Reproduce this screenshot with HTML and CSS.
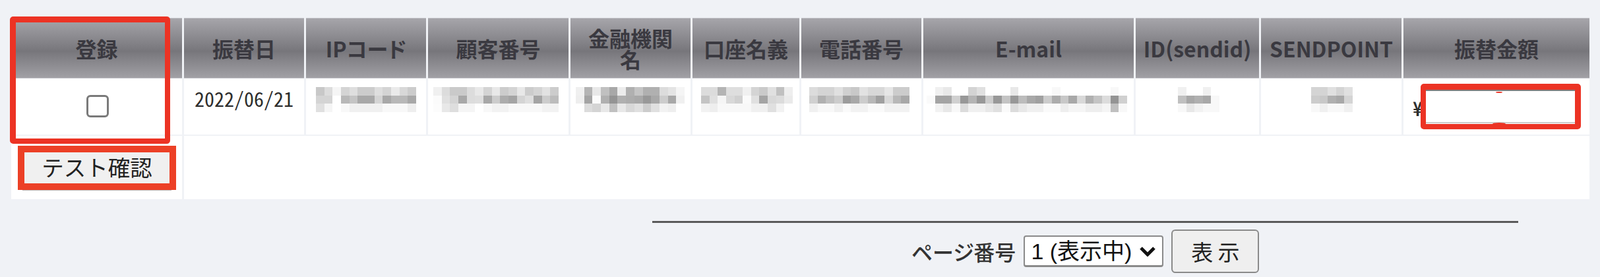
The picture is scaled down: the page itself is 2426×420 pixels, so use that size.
FILE: index.html
```html
<!DOCTYPE html>
<html lang="ja">
  <head>
    <meta charset="UTF-8" />
    <title>テスト確認</title>
    <link rel="stylesheet" href="styles.css">
  </head>
  <body>
    <div class="page">
      <table class="list">
        <colgroup>
          <col class="c-check" />
          <col class="c-date" />
          <col class="c-ip" />
          <col class="c-customer" />
          <col class="c-bank" />
          <col class="c-account" />
          <col class="c-phone" />
          <col class="c-mail" />
          <col class="c-id" />
          <col class="c-point" />
          <col class="c-amount" />
        </colgroup>
        <thead>
          <tr>
            <th>登録</th>
            <th>振替日</th>
            <th>IPコード</th>
            <th>顧客番号</th>
            <th>金融機関<br />名</th>
            <th>口座名義</th>
            <th>電話番号</th>
            <th>E-mail</th>
            <th>ID(sendid)</th>
            <th>SENDPOINT</th>
            <th>振替金額</th>
          </tr>
        </thead>
        <tbody>
          <tr class="data-row">
            <td class="check-cell"><input type="checkbox" /></td>
            <td class="date-cell">2022/06/21</td>
            <td class="blur-cell" data-mosaic="ip"></td>
            <td class="blur-cell" data-mosaic="customer"></td>
            <td class="blur-cell" data-mosaic="bank"></td>
            <td class="blur-cell" data-mosaic="account"></td>
            <td class="blur-cell" data-mosaic="phone"></td>
            <td class="blur-cell" data-mosaic="mail"></td>
            <td class="blur-cell" data-mosaic="id"></td>
            <td class="blur-cell" data-mosaic="point"></td>
            <td>
              <div class="amount">
                <span class="yen">¥</span>
                <input type="text" class="amount-input" />
              </div>
            </td>
          </tr>
          <tr class="action-row">
            <td><button type="button" class="test-btn">テスト確認</button></td>
            <td colspan="10"></td>
          </tr>
        </tbody>
      </table>

      <div class="pager">
        <div class="pager-line"></div>
        <form class="pager-form">
          <label for="page-no">ページ番号</label>
          <select id="page-no">
            <option>1 (表示中)</option>
          </select>
          <button type="button" class="show-btn">表 示</button>
        </form>
      </div>

      <div class="mark mark-check"></div>
      <div class="mark mark-btn"></div>
      <div class="mark mark-amount"></div>
    </div>
    <script src="mosaic.js"></script>
  </body>
</html>
```

FILE: styles.css
```css
* {
  margin: 0;
  padding: 0;
  box-sizing: border-box;
}

html,
body {
  height: 420px;
  overflow: hidden;
}

body {
  font-family: "Noto Sans CJK JP", "Liberation Sans", sans-serif;
  background-color: #f0f2f6;
  color: #333;
}

.page {
  position: relative;
  padding: 27px 0 0 14px;
}

.list {
  table-layout: fixed;
  width: 2399px;
  border-collapse: separate;
  border-spacing: 3px 0;
}

.c-check { width: 259px; }
.c-date { width: 182px; }
.c-ip { width: 182px; }
.c-customer { width: 213px; }
.c-bank { width: 182px; }
.c-account { width: 162px; }
.c-phone { width: 182px; }
.c-mail { width: 319px; }
.c-id { width: 187px; }
.c-point { width: 213px; }
.c-amount { width: 282px; }

.list th {
  height: 92px;
  border: 1px solid #c6c6cb;
  border-width: 1px 0;
  background: linear-gradient(#a6a5aa, #77767b 55%, #a1a0a5);
  color: #3a3940;
  font-size: 32px;
  line-height: 32px;
  font-weight: 700;
  font-feature-settings: "palt";
  text-align: center;
  vertical-align: middle;
}

.list td {
  background-color: #fff;
  vertical-align: top;
}

.data-row td {
  height: 87px;
  padding-top: 1px;
  border-bottom: 2px solid #f0f2f6;
}

.check-cell {
  text-align: center;
}

.check-cell input {
  appearance: none;
  display: inline-block;
  width: 34px;
  height: 34px;
  margin: 24px 0 0 3px;
  border: 3px solid #7a7a7a;
  border-radius: 6px;
  background-color: #fff;
}

.date-cell {
  text-align: center;
  font-size: 30px;
  line-height: 36px;
  font-feature-settings: "hwid";
  color: #2e2e2e;
}

.data-row .date-cell {
  padding-top: 12px;
}

.blur-cell canvas {
  display: block;
  height: 38px;
  margin-top: 12px;
  image-rendering: pixelated;
  filter: blur(0.5px);
}

.amount {
  display: flex;
  align-items: center;
  padding: 15px 0 0 14px;
}

.yen {
  width: 15px;
  margin-top: 4px;
  font-size: 30px;
  line-height: 38px;
  font-weight: 500;
  font-feature-settings: "hwid";
  color: #2e2e2e;
}

.amount-input {
  width: 235px;
  height: 52px;
  border: 1px solid #ccc;
  border-top: 3px solid #7e7e7e;
  border-bottom-width: 2px;
  background-color: #fff;
}

.action-row td {
  height: 96px;
}

.test-btn {
  display: block;
  width: 226px;
  height: 65px;
  margin: 18px 0 0 17px;
  padding-bottom: 8px;
  border: 1px solid #bbb;
  background-color: #f0f0f0;
  color: #222;
  font-family: inherit;
  font-size: 33.5px;
  line-height: 40px;
}

.pager {
  width: 1313px;
  margin: 33px 0 0 975px;
}

.pager-line {
  height: 3px;
  background-color: #5a5a5a;
}

.pager-form {
  display: flex;
  justify-content: center;
  align-items: center;
  gap: 12px;
  margin-top: 10px;
}

.pager-form label {
  font-size: 32px;
  line-height: 40px;
  font-weight: 500;
  font-feature-settings: "palt";
  color: #333;
}

.pager-form select {
  appearance: none;
  width: 212px;
  height: 48px;
  padding-left: 9px;
  border: 2px solid #8a8a8a;
  border-bottom-width: 3px;
  border-radius: 4px;
  background: #fff url("data:image/svg+xml,%3Csvg xmlns='http://www.w3.org/2000/svg' viewBox='0 0 26 16'%3E%3Cpath d='M3 3l10 10L23 3' fill='none' stroke='%23111' stroke-width='5'/%3E%3C/svg%3E") no-repeat right 9px center / 26px 16px;
  color: #111;
  font-family: "Liberation Sans", "Noto Sans CJK JP", sans-serif;
  font-size: 34px;
}

.show-btn {
  width: 133px;
  height: 66px;
  border: 2px solid #8a8a8a;
  border-radius: 6px;
  background-color: #efefef;
  color: #222;
  font-family: inherit;
  font-size: 33px;
}

.mark {
  position: absolute;
  border: 8px solid #ec3324;
  border-radius: 5px;
}

.mark-check {
  left: 15px;
  top: 25px;
  width: 243px;
  height: 193px;
  border-width: 9px 8px 8px 9px;
}

.mark-btn {
  left: 27px;
  top: 221px;
  width: 240px;
  height: 67px;
  border-width: 10px;
  border-color: #ec4026;
  border-radius: 0;
}

.mark-amount {
  left: 2154px;
  top: 127px;
  width: 243px;
  height: 69px;
  border-width: 9px 9px 8px 8px;
}

.mark-amount::before,
.mark-amount::after {
  content: "";
  position: absolute;
  background-color: #ec3324;
  border-radius: 50%;
}

.mark-amount::before {
  left: 106px;
  top: 3px;
  width: 10px;
  height: 2px;
}

.mark-amount::after {
  left: 101px;
  bottom: -1px;
  width: 20px;
  height: 3px;
}
```

FILE: mosaic.js
```js
// blurred cell contents, grey level of each block by row
const CELL = 12.67;

const mosaics = {
  ip: {
    left: 15,
    rows: [
      "c8 dc f5 d4 de cc cc de d4 ea d8 cc",
      "d4 d4 ff b8 c4 a8 a8 d4 a8 b8 b8 a8",
      "e0 f5 ff f8 f0 f0 f0 f0 f8 f8 f8 ee",
    ],
  },
  customer: {
    left: 8,
    rows: [
      "f0 dc ca ca dc e8 d4 e8 cc d4 e8 cc d4 e2 cc",
      "fb e0 d4 a8 dc de a8 cc ac a4 d4 de a4 cc bc",
      "fc e8 de f5 f5 ff f8 f2 f2 f8 f8 f8 f8 f2 f2",
    ],
  },
  bank: {
    left: 8,
    rows: [
      "f0 b4 e8 c0 a8 ec b0 c4 b0 b0 dc e4 f5",
      "ee a4 fb b0 94 b0 ac a8 98 a8 cc a8 f0",
      "ff dc d4 e8 c0 e8 d8 e0 cc e0 f2 ee ff",
    ],
  },
  account: {
    left: 13,
    rows: [
      "dc dc b4 de de f0 d4 ca e0 c0 ee",
      "c4 e0 f5 d8 d0 fa e0 a4 d8 dc ea",
      "f2 ee f8 f8 f8 f8 f0 f0 e0 f2 ff",
    ],
  },
  phone: {
    left: 12,
    rows: [
      "dc d4 d4 e0 d0 c8 e2 d8 d8 e6 cc cc",
      "d0 b0 c0 cc 9c a8 cc b8 a0 d8 b8 a8",
      "f0 f8 f8 f0 fa f2 f2 fa fa f2 f2 f2",
    ],
  },
  mail: {
    left: 5,
    rows: [
      "ff f0 e8 ff ff d4 e0 ff ff ff e8 ff ff ff ff f8 ff ff ff ff ff ff f8 ff",
      "fa a4 a4 d0 98 b4 98 cc 98 c4 98 bc a8 a0 cc ac c8 a8 d8 b0 c4 dc 94 d0",
      "ff f2 e8 f8 dc f0 f0 e8 e0 fa dc e8 f0 f0 fa fa ee f5 f5 ee ee f5 c0 f8",
    ],
  },
  id: {
    left: 64,
    rows: ["f0 ff ff f0 ff", "c0 a8 b0 a8 f8", "f8 e8 f2 f8 f8"],
  },
  point: {
    left: 76,
    rows: ["d4 d4 e0 d4 e0", "cc c8 b0 a8 d4", "f8 f0 f8 f8 f0"],
  },
};

document.querySelectorAll("[data-mosaic]").forEach(function (cell) {
  const data = mosaics[cell.dataset.mosaic];
  const rows = data.rows.map((row) => row.split(" "));
  const canvas = document.createElement("canvas");
  canvas.width = rows[0].length;
  canvas.height = rows.length;
  canvas.style.width = rows[0].length * CELL + "px";
  canvas.style.marginLeft = data.left + "px";

  const ctx = canvas.getContext("2d");
  rows.forEach(function (row, y) {
    row.forEach(function (grey, x) {
      ctx.fillStyle = "#" + grey + grey + grey;
      ctx.fillRect(x, y, 1, 1);
    });
  });
  cell.appendChild(canvas);
});
```
